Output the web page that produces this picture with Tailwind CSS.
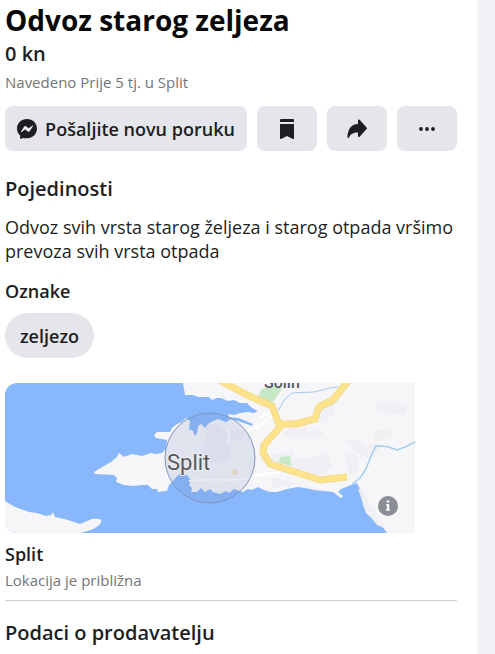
<!DOCTYPE html>
<html lang="hr">
<head>
  <meta charset="UTF-8">
  <meta name="viewport" content="width=device-width, initial-scale=1.0">
  <title>Odvoz starog zeljeza</title>
  <script src="https://cdn.jsdelivr.net/npm/@tailwindcss/browser@4"></script>
</head>
<body class="bg-[#f0f2f5] font-['Open_Sans','Noto_Sans',sans-serif] text-[#1c1e21]">
  <main class="mr-[18px] min-h-screen bg-white pl-[5px] pr-5">
    <h1 class="pt-1 text-[28px] leading-8 font-bold text-[#080809]">Odvoz starog zeljeza</h1>
    <p class="mt-1 text-xl leading-7 font-semibold">0 kn</p>
    <p class="mt-1 text-[15px] leading-5 text-[#737578]">Navedeno Prije 5 tj. u Split</p>

    <div class="mt-[14px] flex h-[45px] gap-[10px]">
      <button type="button" class="flex flex-1 items-center justify-center gap-2 rounded-lg bg-[#e4e6eb] text-lg font-semibold whitespace-nowrap">
        <svg class="size-5 shrink-0" viewBox="0 0 20 20" aria-hidden="true">
          <path fill="#1c1e21" d="M10 0C4.300 0 0 4.100 0 9.600c0 2.900 1.200 5.300 3.100 7v2.500c0 .6.600 1 1.100.7l2.100-.9c1.100.3 2.400.4 3.700.4 5.700 0 10-4.200 10-9.700S15.700 0 10 0z"/>
          <path fill="#e4e6eb" d="M4 12.400l3-4.700c.5-.7 1.400-.9 2.100-.4l2.300 1.700c.2.200.5.200.7 0l3.100-2.300c.4-.3 1 .2.700.6l-3 4.700c-.5.7-1.400.9-2.100.4L8.500 10.700c-.2-.2-.5-.2-.7 0L4.700 13c-.4.300-1-.2-.7-.6z"/>
        </svg>
        Pošaljite novu poruku
      </button>
      <button type="button" aria-label="Spremi" class="flex w-15 items-center justify-center rounded-lg bg-[#e4e6eb]">
        <svg class="h-5 w-4" viewBox="0 0 16 20" fill="#1c1e21" aria-hidden="true">
          <path d="M2 0h12a1 1 0 0 1 1 1v2H1V1a1 1 0 0 1 1-1zM1 5h14v14.300c0 .6-.6.900-1.100.6L8 17l-5.900 2.900c-.5.300-1.100 0-1.100-.6z"/>
        </svg>
      </button>
      <button type="button" aria-label="Podijeli" class="flex w-15 items-center justify-center rounded-lg bg-[#e4e6eb]">
        <svg class="size-5" viewBox="0 0 20 20" fill="#1c1e21" aria-hidden="true">
          <path d="M11 1.500c0-.9 1-1.300 1.600-.7l7 7.700c.5.500.5 1.100 0 1.600l-7 7.600c-.6.700-1.600.3-1.600-.6v-3.600c-4.500-.1-7.300 1.300-9 5-.4.900-1.500.7-1.500-.3C.6 10.500 4 5.300 11 5z"/>
        </svg>
      </button>
      <button type="button" aria-label="Više" class="flex w-15 items-center justify-center rounded-lg bg-[#e4e6eb]">
        <svg class="h-1 w-4" viewBox="0 0 16 4" fill="#1c1e21" aria-hidden="true">
          <circle cx="2" cy="2" r="1.900"/><circle cx="8" cy="2" r="1.900"/><circle cx="14" cy="2" r="1.900"/>
        </svg>
      </button>
    </div>

    <h2 class="mt-6 text-xl leading-7 font-semibold">Pojedinosti</h2>
    <p class="mt-3 text-lg leading-6">Odvoz svih vrsta starog željeza i starog otpada vršimo prevoza svih vrsta otpada</p>

    <h3 class="mt-4 text-lg leading-6 font-semibold">Oznake</h3>
    <a href="#" class="mt-[10px] flex h-[45px] w-fit items-center rounded-full bg-[#e4e6eb] px-[15px] text-lg font-semibold">zeljezo</a>

    <div class="relative mt-[25px] h-[150px] max-w-[410px] overflow-hidden rounded-l-xl">
      <svg class="size-full" viewBox="0 0 410 150" preserveAspectRatio="xMinYMin slice" role="img" aria-label="Karta: Split">
        <rect width="410" height="150" fill="#88b7fc"/>
        <!-- mainland and the Marjan peninsula -->
        <path fill="#f6f6f9" d="M178 0L180 12L188 12L193 14L204 14L207 17L212 15L216 15L223 18L229 17L235 20L242 20L247 25L253 28L249 30L243 29L235 30L230 32L223 31L224 34L234 35L248 41L247 43L236 39L226 36L221 39L213 36L206 39L203 41L200 45L196 41L193 43L192 50L190 53L188 48L184 46L185 38L181 35L177 39L172 41L167 45L165 49L152 49L149 52L151 55L162 57L161 66L157 70L151 71L146 70L137 73L127 71L119 74L114 70L112 74L106 79L99 83L89 89L90 91L109 92L112 95L111 99L119 102L128 103L137 102L143 102L147 106L152 106L153 109L162 108L164 102L168 98L172 93L177 90L183 93L186 98L184 102L187 105L186 109L192 109L196 105L200 109L205 106L208 109L215 111L221 108L224 110L229 106L238 109L243 106L247 107L253 104L259 107L265 109L272 109L282 106L293 104L306 106L319 108L328 109L336 115L338 113L333 109L336 106L341 104L346 102L352 100L355 106L358 111L358 121L361 130L370 138L377 143L382 150H410V0z"/>
        <path fill="#f6f6f9" d="M0 118l10 6 14 5 8 1 9 3 5-1 2-3 2 5 5 1 8 2 12 4 12-5c7-1 12 0 8 5-4 5-12 7-20 9H0z"/>
        <!-- built-up areas -->
        <g fill="#f0f0f4">
          <path d="M202 43l9-2 11 7 19-2-2 9-14 5 0 17-19 3-8-9z"/>
          <path d="M276 51l14-8 10 6 14-4 4 6-6 4-7-3-11 5zM266 72l23-5 0 7 17 2 16-8 5 16-9 8-22 1-9-6-20 0zM266 94l10 2 42 13-9-2-16-5-26 3zM370 20l17 0 4-3 6 5 5 1-2 9-10-1-6 1-7-4-7 1zM341 57l7-2 13 8 9-4 5 4-5 10-7 2-15-8zM341 69l13 4-2 15-9 4zM315 27l15-8-2 13-9 6-9 2zM353 105l8 7 7 15 7 11 6 8-9-4-12-15z"/>
        </g>
        <g fill="#f1eff0"><path d="M369 48l12-2 7 4-3 6-11 2-6-4zM294 45l7-1 1 5-6 1z"/></g>
        <g fill="#c7e7c7"><path d="M257 6l10-4 10 4-9 13-16-4zM275 74l10-1 1 10-12-3z"/></g>
        <!-- streets -->
        <g fill="none" stroke="#fff" stroke-width="2">
          <path d="M184 98c14-2 27-1 44-1s24-8 47-7M224 45l-1 16M242 47c14-2 16-9 30-17M271 27l-18 8"/>
        </g>
        <!-- rivers -->
        <g fill="none" stroke="#a4ccef">
          <path d="M273 28l6-11 8-7 22-1 16-4 8-1"/>
          <path stroke-width="1.500" d="M347 101L355 95L361 86L366 73L371 63L376 63L384 64L392 67L400 64L410 59"/>
        </g>
        <!-- main roads -->
        <g fill="none" stroke-linejoin="round">
          <path stroke="#f3da83" stroke-width="7" d="M214-3L244 13L267 23L274 41L290 41L310 36L314 24L328 17L344-3M276 43L259 62L258 70L265 81L315 97L342 94"/>
          <path stroke="#fde38b" stroke-width="5" d="M214-3L244 13L267 23L274 41L290 41L310 36L314 24L328 17L344-3M276 43L259 62L258 70L265 81L315 97L342 94"/>
        </g>
        <circle cx="230" cy="89" r="3" fill="#f5e4cc"/>
        <circle cx="205" cy="75" r="45" fill="#6e86b8" fill-opacity=".17" stroke="#8195bd" stroke-width="1"/>
        <g fill="#55585f" font-family="Roboto, sans-serif">
          <text x="259" y="5" font-size="16" font-weight="500">Solin</text>
          <text x="162" y="87" font-size="22" stroke="#eceef3" stroke-width="2" paint-order="stroke">Split</text>
        </g>
      </svg>
      <button type="button" aria-label="Informacije o karti" class="absolute right-[17px] bottom-[17px] size-5 rounded-full">
        <svg class="size-5" viewBox="0 0 20 20" aria-hidden="true">
          <circle cx="10" cy="10" r="10" fill="#8b8e96"/>
          <path fill="#fff" d="M8.700 4.500h2.500v2H8.700zM8 8h3.200v5.300h.8v1.400H8v-1.400h.9V9.400H8z"/>
        </svg>
      </button>
    </div>

    <h3 class="mt-[9px] text-lg leading-6 font-semibold">Split</h3>
    <p class="mt-1 text-[15px] leading-5 text-[#737578]">Lokacija je približna</p>

    <section class="mt-[10px] border-t border-[#ced0d4] pt-[18px]">
      <h2 class="text-xl leading-7 font-semibold">Podaci o prodavatelju</h2>
    </section>
  </main>
</body>
</html>
